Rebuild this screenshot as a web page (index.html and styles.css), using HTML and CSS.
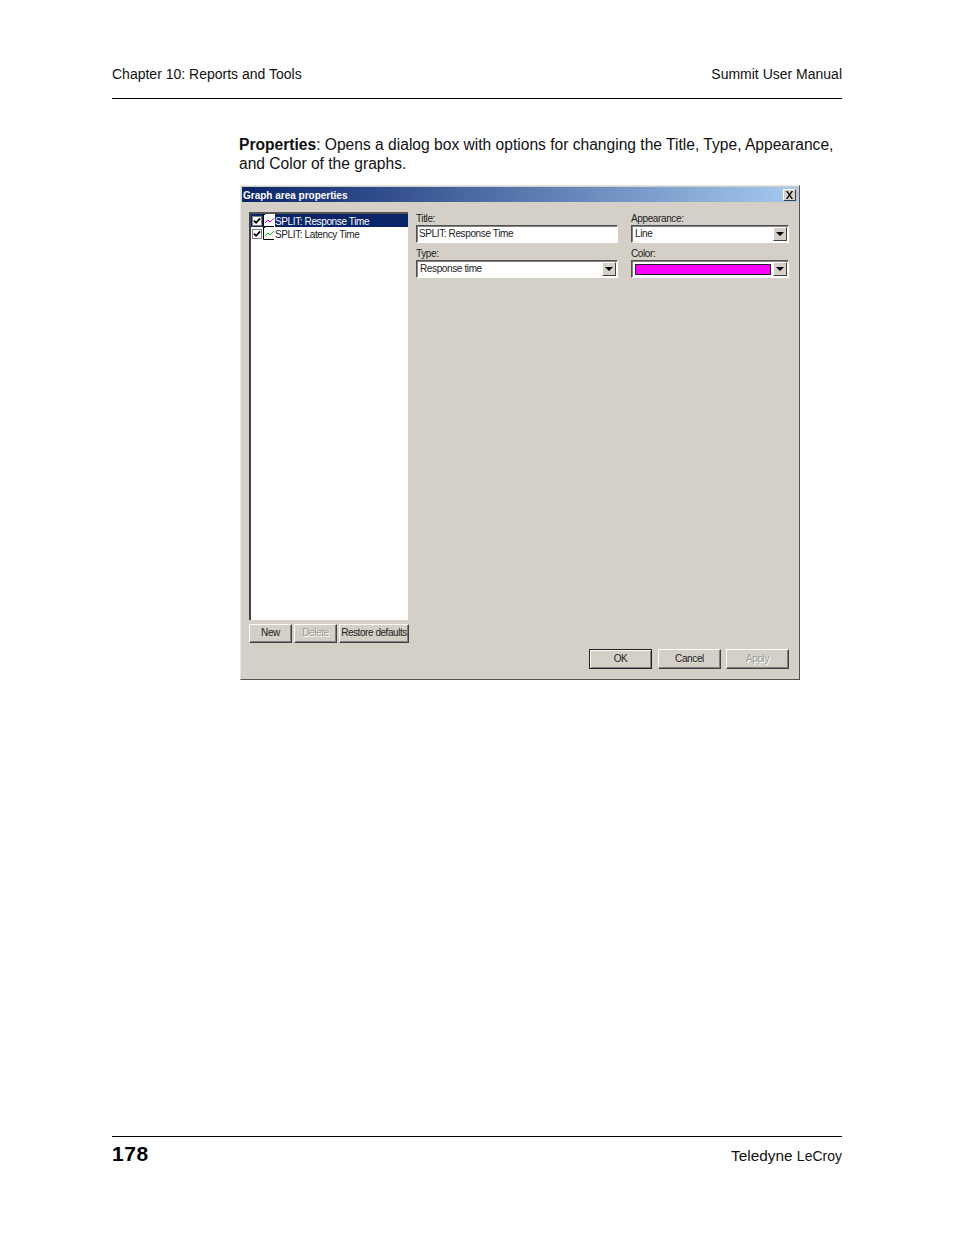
FILE: index.html
```html
<!DOCTYPE html>
<html lang="en">
<head>
<meta charset="utf-8">
<title>Summit User Manual - 178</title>
<link rel="stylesheet" href="styles.css">
</head>
<body>
<div class="page">
  <header class="page-header">
    <span>Chapter 10: Reports and Tools</span>
    <span>Summit User Manual</span>
  </header>
  <main class="content">
    <p class="intro"><b>Properties</b>: Opens a dialog box with options for changing the Title, Type, Appearance, and Color of the graphs.</p>
    <section class="dialog">
      <div class="titlebar">
        <span class="title-text">Graph area properties</span>
        <span class="close-btn"><svg width="9" height="8" viewBox="0 0 9 8"><path d="M1 0h1.500l2 2.700L6.500 0H8L5.300 4 8 8H6.500l-2-2.700L2.500 8H1l2.700-4z" fill="#000"/></svg></span>
      </div>
      <div class="dialog-body">
        <div class="left-col">
          <div class="listbox">
            <div class="list-row selected">
              <span class="check"><svg width="8" height="8" viewBox="0 0 9 9"><path d="M1 4l2.500 2.500L8 1.500" fill="none" stroke="#000" stroke-width="2"/></svg></span>
              <svg class="graph-icon" width="12" height="13" viewBox="0 0 12 13"><rect x="2" y="0" width="10" height="12" fill="#fff"/><path d="M.5 0v12.500H11M.5.500H2" fill="none" stroke="#000"/><path d="M2 9l3-3 2 2 4-4" fill="none" stroke="#f0f"/></svg>
              <span class="row-label">SPLIT: Response Time</span>
            </div>
            <div class="list-row">
              <span class="check"><svg width="8" height="8" viewBox="0 0 9 9"><path d="M1 4l2.500 2.500L8 1.500" fill="none" stroke="#000" stroke-width="2"/></svg></span>
              <svg class="graph-icon" width="12" height="13" viewBox="0 0 12 13"><rect x="2" y="0" width="10" height="12" fill="#fff"/><path d="M.5 0v12.500H11M.5.500H2" fill="none" stroke="#000"/><path d="M2 9l3-3 2 2 4-4" fill="none" stroke="#0c0"/></svg>
              <span class="row-label">SPLIT: Latency Time</span>
            </div>
          </div>
          <div class="list-buttons">
            <span class="btn btn-new">New</span>
            <span class="btn btn-delete disabled">Delete</span>
            <span class="btn btn-restore">Restore defaults</span>
          </div>
        </div>
        <div class="form-grid">
          <div class="field">
            <span class="field-label">Title:</span>
            <span class="input"><span class="value">SPLIT: Response Time</span></span>
          </div>
          <div class="field">
            <span class="field-label">Appearance:</span>
            <span class="input"><span class="value pad">Line</span><span class="drop"><i></i></span></span>
          </div>
          <div class="field">
            <span class="field-label">Type:</span>
            <span class="input"><span class="value pad">Response time</span><span class="drop"><i></i></span></span>
          </div>
          <div class="field">
            <span class="field-label">Color:</span>
            <span class="input"><span class="swatch"></span><span class="drop"><i></i></span></span>
          </div>
        </div>
      </div>
      <div class="dialog-footer">
        <span class="btn btn-foot default">OK</span>
        <span class="btn btn-foot">Cancel</span>
        <span class="btn btn-foot disabled">Apply</span>
      </div>
    </section>
  </main>
  <footer class="page-footer">
    <span class="page-num">178</span>
    <span class="brand">Teledyne <small>LeCroy</small></span>
  </footer>
</div>
</body>
</html>
```

FILE: styles.css
```css
* { box-sizing: border-box; }
html, body { margin: 0; padding: 0; background: #fff; }
body { font-family: "Liberation Sans", Arial, sans-serif; color: #000; }
.page { width: 954px; height: 1235px; padding: 0 112px; display: flex; flex-direction: column; }
.page-header { height: 99px; padding-top: 66px; display: flex; justify-content: space-between; font-size: 14px; line-height: 16px; border-bottom: 1px solid #000; color: #111; }
.content { padding-left: 128px; }
.intro { margin: 36px 0 0 -1px; width: 603px; font-size: 15.6px; line-height: 19px; color: #111; }
.dialog { margin-top: 12px; width: 560px; height: 495px; background: #d4d0c8; border: 1px solid; border-color: #e8e6e1 #55534f #55534f #e8e6e1; padding: 1px 1px 0; display: flex; flex-direction: column; font-size: 10px; line-height: 12px; letter-spacing: -0.38px; color: #222; }
.titlebar { height: 15px; flex: none; display: flex; justify-content: space-between; align-items: center; padding: 0 2px 0 1px; background: linear-gradient(90deg, #0a246a, #a6caf0); }
.title-text { color: #fff; font-weight: bold; font-size: 10px; letter-spacing: 0; padding-top: 2px; }
.close-btn { width: 13px; height: 12px; background: #d4d0c8; border: 1px solid; border-color: #fff #404040 #404040 #fff; display: flex; align-items: center; justify-content: center; }
.dialog-body { flex: none; display: flex; padding: 10px 0 0 7px; height: 441px; }
.left-col { width: 160px; flex: none; }
.listbox { width: 159px; height: 408px; background: #fff; border-left: 2px solid #404040; border-top: 2px solid #55534f; }
.list-row { height: 13px; display: flex; align-items: center; }
.list-row.selected { background: #0a246a; color: #fff; }
.check { width: 10px; height: 10px; margin-left: 1px; flex: none; background: #fff; border: 1px solid #808080; display: flex; align-items: center; justify-content: center; }
.check svg { flex: none; }
.graph-icon { flex: none; margin-left: 1px; background: #fff; }
.row-label { white-space: nowrap; position: relative; top: 1px; }
.list-buttons { margin-top: 4px; display: flex; gap: 2px; }
.btn { height: 19px; padding-bottom: 1px; display: flex; align-items: center; justify-content: center; background: #d4d0c8; border: 1px solid; border-color: #fff #404040 #404040 #fff; box-shadow: inset -1px -1px 0 #808080; white-space: nowrap; }
.btn-new, .btn-delete { width: 43px; }
.btn-restore { width: 70px; letter-spacing: -0.45px; }
.disabled { color: #9a9a94; text-shadow: 1px 1px 0 #fff; }
.form-grid { margin-left: 7px; width: 373px; display: grid; grid-template-columns: 202px 158px; column-gap: 13px; grid-auto-rows: 35px; align-content: start; }
.field { display: flex; flex-direction: column; }
.field-label { height: 12px; line-height: 14px; }
.input { margin-top: 1px; height: 18px; background: #fff; border: 1px solid; border-color: #55534f #fff #fff #55534f; box-shadow: inset 1px 1px 0 #808080; display: flex; align-items: center; padding: 1px; }
.value { flex: 1; padding-left: 1px; white-space: nowrap; line-height: 14px; }
.value.pad { padding-left: 2px; }
.swatch { flex: 1; height: 11px; margin: 0 2px; background: #f0f; border: 1px solid #222; }
.drop { width: 14px; height: 14px; flex: none; background: #d4d0c8; border: 1px solid; border-color: #fff #404040 #404040 #fff; display: flex; align-items: center; justify-content: center; }
.drop i { display: block; width: 0; height: 0; border: 4px solid transparent; border-top-color: #000; border-bottom: 0; }
.dialog-footer { display: flex; justify-content: flex-end; gap: 5px; padding: 6px 9px 0 0; }
.btn-foot { width: 63px; height: 20px; }
.btn-foot.default { margin-right: 1px; border-color: #222; box-shadow: inset 1px 1px 0 #fff, inset -1px -1px 0 #808080; }
.page-footer { margin-top: auto; margin-bottom: 66px; padding-top: 5px; height: 33px; border-top: 1px solid #000; display: flex; justify-content: space-between; align-items: flex-start; }
.page-num { font-size: 21px; line-height: 24px; font-weight: bold; letter-spacing: 0.6px; }
.brand { font-size: 15.4px; line-height: 28px; color: #111; }
.brand small { font-size: 14px; }
```
